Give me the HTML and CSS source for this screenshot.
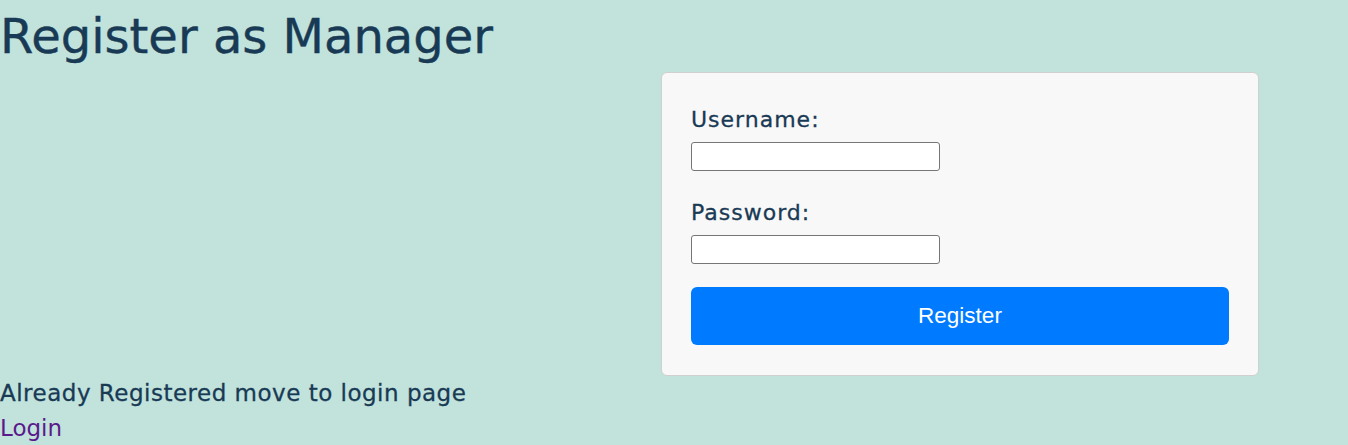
FILE: index.html
```html
<!DOCTYPE html>
<html>
<head>
<meta charset="utf-8">
<link rel="stylesheet" href="styles.css">
</head>
<body>
<h1 class="title">Register as Manager</h1>
<div class="form-row">
  <form class="card">
    <label class="field-label" for="u">Username:</label>
    <input class="field-input" id="u" type="text">
    <label class="field-label" for="p">Password:</label>
    <input class="field-input" id="p" type="password">
    <button class="btn" type="button">Register</button>
  </form>
</div>
<p class="already">Already Registered move to login page</p>
<a class="login" href="#">Login</a>
</body>
</html>
```
FILE: styles.css
```css
html, body {
  margin: 0;
  padding: 0;
}
body {
  background: #c1e3dc;
  font-family: "DejaVu Sans", "Open Sans", sans-serif;
  color: #193a55;
  width: 1348px;
  height: 445px;
  overflow: hidden;
}
.title {
  margin: 0;
  font-size: 48px;
  font-weight: 400;
  line-height: 72px;
  height: 72px;
  -webkit-text-stroke: 0.4px currentColor;
}
.form-row {
  display: flex;
  justify-content: flex-end;
  padding-right: 89px;
}
.card {
  width: 538px;
  padding: 32px 29px 30px 29px;
  background: #f8f8f8;
  border: 1px solid #d0d0d0;
  border-radius: 6px;
  display: flex;
  flex-direction: column;
  align-items: flex-start;
}
.field-label {
  font-size: 22px;
  font-weight: 400;
  line-height: 30px;
  letter-spacing: 1px;
  margin: 0 0 7px 0;
  -webkit-text-stroke: 0.3px currentColor;
}
.field-input {
  width: 249px;
  height: 29px;
  box-sizing: border-box;
  border: 1px solid #767676;
  border-radius: 3px;
  background: #fff;
  margin: 0 0 27px 0;
  padding: 0 4px;
}
.field-input:last-of-type {
  margin-bottom: 23px;
}
.btn {
  width: 538px;
  height: 58px;
  margin: 0;
  border: none;
  border-radius: 6px;
  background: #007bff;
  color: #fff;
  font-family: "Liberation Sans", Arial, sans-serif;
  font-size: 22.5px;
}
.already {
  margin: 0;
  font-size: 23px;
  font-weight: 400;
  line-height: 34px;
  letter-spacing: 0.5px;
  -webkit-text-stroke: 0.3px currentColor;
}
.login {
  display: block;
  font-size: 23px;
  line-height: 36px;
  color: #5b1a8b;
  text-decoration: none;
}
```
